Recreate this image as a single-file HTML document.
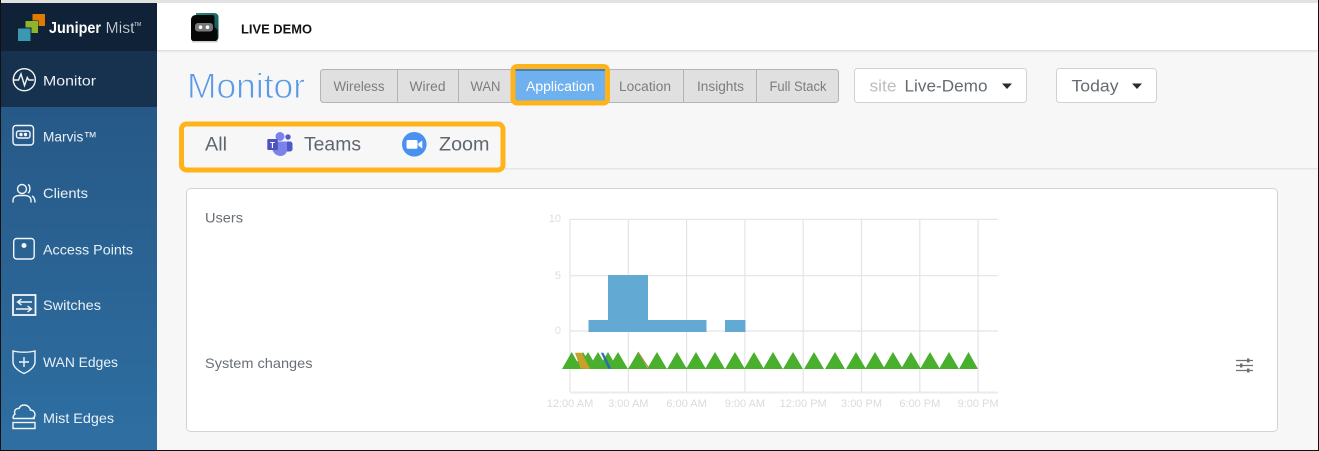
<!DOCTYPE html>
<html lang="en">
<head>
<meta charset="utf-8">
<title>Juniper Mist - Monitor</title>
<style>
html,body{margin:0;padding:0;width:1319px;height:451px;overflow:hidden;background:#f7f7f7}
svg{display:block}
text{font-family:"Liberation Sans",sans-serif}
.nav{font-size:14px;fill:#e9f1f7}
.tab{font-size:13.5px;fill:#7d7d7d}
.ax{font-size:11px;fill:#d9dbde}
.ay{font-size:11px;fill:#e4ddd8}
.lbl{font-size:14px;fill:#6a6f75}
.sub{font-size:19px;fill:#5f6770}
.ic{fill:none;stroke:#f2f6f9;stroke-width:1.4}
</style>
</head>
<body>
<svg width="1319" height="451" viewBox="0 0 1319 451" xmlns="http://www.w3.org/2000/svg">
<defs>
<linearGradient id="side" x1="0" y1="0" x2="0" y2="1"><stop offset="0" stop-color="#24527f"/><stop offset="1" stop-color="#2e6fa2"/></linearGradient>
<linearGradient id="hs" x1="0" y1="0" x2="0" y2="1"><stop offset="0" stop-color="#dcdcdc"/><stop offset="1" stop-color="#f7f7f7"/></linearGradient>
<linearGradient id="teal" x1="0" y1="0" x2="1" y2="1"><stop offset="0" stop-color="#2a8a84"/><stop offset="1" stop-color="#0f4a4a"/></linearGradient>
</defs>
<rect width="1319" height="451" fill="#f7f7f7"/>

<!-- header -->
<rect x="157" y="3" width="1162" height="47" fill="#fff"/>
<rect x="157" y="50" width="1162" height="3" fill="url(#hs)"/>
<rect x="0" y="0" width="1319" height="3" fill="#e2e2e2"/>
<rect x="192" y="40" width="26" height="2.500" rx="1" fill="#c9cfcf"/>
<path d="M196 13h18c3 0 4.500 2 4.500 4v20c0 2-1.500 4-4 4H196z" fill="url(#teal)"/>
<path d="M191 20c0-3 2-5 5-5h16c1.500 0 2.500 1 2.500 2.500V27l3 3v8c0 2-1 3-3 3H194c-2 0-3-1-3-3z" fill="#070707"/>
<rect x="195" y="23" width="18" height="8.500" rx="3" fill="#77797b"/>
<circle cx="200.500" cy="27.200" r="1.800" fill="#fff"/><circle cx="207.500" cy="27.200" r="1.800" fill="#fff"/>
<text x="241" y="33.500" font-size="13" font-weight="700" fill="#141414" textLength="71" lengthAdjust="spacingAndGlyphs">LIVE DEMO</text>

<!-- sidebar -->
<rect x="1" y="3" width="156" height="448" fill="url(#side)"/>
<rect x="1" y="3" width="156" height="48" fill="#0f2238"/>
<rect x="1" y="51" width="156" height="56" fill="#16324f"/>
<rect x="32.500" y="14" width="12.500" height="12" fill="#e07b00"/>
<rect x="24.500" y="20.500" width="14" height="13" fill="#0f2238"/>
<rect x="25.500" y="21" width="12.500" height="12" fill="#8fb52c"/>
<rect x="17" y="27.500" width="14.500" height="14" fill="#0f2238"/>
<rect x="18" y="28.500" width="12.500" height="12.500" fill="#3b98b3"/>
<text x="49" y="33" font-size="15.500" font-weight="700" fill="#fff" textLength="52" lengthAdjust="spacingAndGlyphs">Juniper</text>
<text x="105.500" y="33" font-size="15.500" fill="#dfe4e9" stroke="#0f2238" stroke-width=".3" textLength="29" lengthAdjust="spacingAndGlyphs">Mist</text>
<text x="134" y="26" font-size="5" fill="#dfe4e9">TM</text>

<circle class="ic" cx="24.300" cy="79.700" r="11"/>
<path class="ic" d="M14 80h4.500l2.500-6 3.500 11.500 2.800-8 1.500 2.500h5"/>
<text class="nav" x="43" y="85.300" textLength="53" lengthAdjust="spacingAndGlyphs">Monitor</text>

<rect class="ic" x="13" y="125.500" width="20.500" height="19.500" rx="3"/>
<rect class="ic" x="16.500" y="131" width="13.500" height="7" rx="2"/>
<circle cx="21" cy="134.500" r="1.700" fill="#f2f6f9"/><circle cx="25.500" cy="134.500" r="1.700" fill="#f2f6f9"/>
<text class="nav" x="43" y="141.300" textLength="54" lengthAdjust="spacingAndGlyphs">Marvis™</text>

<circle class="ic" cx="22" cy="189" r="4.500"/>
<path class="ic" d="M13 202.500v-2c0-3.500 3-5 6-5h6c3 0 6 1.500 6 5v2M28 184.500c2.500 1 2.500 7 0 8.500M32 196c2 1 3 2.500 3 6.500"/>
<text class="nav" x="43" y="198" textLength="45" lengthAdjust="spacingAndGlyphs">Clients</text>

<rect class="ic" x="13.700" y="238.500" width="20.500" height="20.500" rx="3"/>
<circle cx="24" cy="245.500" r="2.500" fill="#f2f6f9"/>
<text class="nav" x="43" y="254.300" textLength="90" lengthAdjust="spacingAndGlyphs">Access Points</text>

<rect class="ic" style="stroke-width:1.800" x="13" y="295" width="22.500" height="20"/>
<path class="ic" d="M32 302H18M21.500 299l-4 3 4 3M16 309h15M27.500 306l4 3-4 3"/>
<text class="nav" x="43" y="310" textLength="58" lengthAdjust="spacingAndGlyphs">Switches</text>

<path class="ic" d="M13 351c3 .8 7 1.200 11 1.200s8-.4 11-1.200v11c0 5-6 9.500-11 11.500-5-2-11-6.500-11-11.500z"/>
<path class="ic" d="M24 357v10M19 362h10"/>
<text class="nav" x="43" y="367" textLength="75" lengthAdjust="spacingAndGlyphs">WAN Edges</text>

<path class="ic" d="M13 418.500c0-2 .5-3.500 2-4.500-1.500-3 1-6 4-5.500 1-2.500 3-3.500 5-3.500 3.500 0 6 2.500 6.500 5 2.500 0 4.500 2 4.500 4.500 0 1.500-.8 2.800-2 3.500M13 418.500h22"/>
<rect class="ic" x="13" y="422.500" width="22" height="6"/>
<text class="nav" x="43" y="423" textLength="71" lengthAdjust="spacingAndGlyphs">Mist Edges</text>

<!-- title -->
<text x="187" y="98" font-size="35.500" fill="#5a9ae8" stroke="#f7f7f7" stroke-width=".9" textLength="118" lengthAdjust="spacingAndGlyphs">Monitor</text>

<!-- tabs -->
<rect x="320.500" y="69.500" width="518" height="33" rx="3" fill="#e0e0e0" stroke="#b4b4b4"/>
<path d="M397.500 70v32M458.500 70v32M683.500 70v32M756.500 70v32" stroke="#b4b4b4"/>
<text class="tab" x="333.500" y="91" textLength="51" lengthAdjust="spacingAndGlyphs">Wireless</text>
<text class="tab" x="409.500" y="91" textLength="36" lengthAdjust="spacingAndGlyphs">Wired</text>
<text class="tab" x="470.500" y="91" textLength="30" lengthAdjust="spacingAndGlyphs">WAN</text>
<rect x="513" y="66.500" width="94.500" height="36.500" rx="4" fill="#6fb0ee" stroke="#ffb31a" stroke-width="5"/>
<rect x="515.500" y="69" width="89.500" height="2" fill="#3f80bd"/>
<text class="tab" style="fill:#fff" x="526" y="91" textLength="68.500" lengthAdjust="spacingAndGlyphs">Application</text>
<text class="tab" x="619" y="91" textLength="52" lengthAdjust="spacingAndGlyphs">Location</text>
<text class="tab" x="697" y="91" textLength="47" lengthAdjust="spacingAndGlyphs">Insights</text>
<text class="tab" x="769.500" y="91" textLength="57" lengthAdjust="spacingAndGlyphs">Full Stack</text>

<!-- dropdowns -->
<rect x="854.500" y="68.500" width="172" height="34" rx="3" fill="#fff" stroke="#d2d2d2"/>
<text x="869.500" y="91.500" font-size="16.500" fill="#bdbdbd" textLength="27" lengthAdjust="spacingAndGlyphs">site</text>
<text x="904.500" y="91.500" font-size="16.500" fill="#646b73" textLength="83" lengthAdjust="spacingAndGlyphs">Live-Demo</text>
<path d="M1002 83.500h10l-5 5.500z" fill="#2b2b2b"/>
<rect x="1056.500" y="68.500" width="100" height="34" rx="3" fill="#fff" stroke="#d2d2d2"/>
<text x="1071.500" y="91.500" font-size="16.500" fill="#646b73" textLength="47" lengthAdjust="spacingAndGlyphs">Today</text>
<path d="M1132 83.500h10l-5 5.500z" fill="#2b2b2b"/>

<!-- sub tabs -->
<rect x="505" y="168" width="814" height="1.500" fill="#e6e6e6"/>
<rect x="181.500" y="124" width="321.500" height="46" rx="5" fill="#f7f7f7" stroke="#ffb31a" stroke-width="5"/>
<text class="sub" x="205" y="150.500" textLength="22" lengthAdjust="spacingAndGlyphs">All</text>
<circle cx="288" cy="137" r="2.700" fill="#5059c9"/>
<rect x="284" y="141.500" width="8.500" height="10" rx="2.500" fill="#5059c9"/>
<circle cx="280" cy="136.500" r="4.500" fill="#7b83eb"/>
<path d="M272 141.500h15v8c0 4-3 6.500-6.500 6.500s-7-2.500-8-6z" fill="#7b83eb"/>
<rect x="267.300" y="139" width="10.500" height="11" rx="1" fill="#4b53bc"/>
<text x="270" y="148" font-size="8" font-weight="700" fill="#fff">T</text>
<text class="sub" x="304" y="150.500" textLength="57" lengthAdjust="spacingAndGlyphs">Teams</text>
<circle cx="414.300" cy="144.300" r="12.300" fill="#4a90f0"/>
<rect x="406.500" y="140" width="11" height="8.800" rx="1.500" fill="#fff"/>
<path d="M418.300 143.500l4-3v8l-4-3z" fill="#fff"/>
<text class="sub" x="439" y="150.500" textLength="50.500" lengthAdjust="spacingAndGlyphs">Zoom</text>

<!-- card -->
<rect x="186.500" y="188.500" width="1091" height="243" rx="4" fill="#fff" stroke="#d4d4d4"/>
<text class="lbl" x="205" y="222.500" textLength="38" lengthAdjust="spacingAndGlyphs">Users</text>
<text class="lbl" x="205" y="368" textLength="107.500" lengthAdjust="spacingAndGlyphs">System changes</text>

<!-- chart grid -->
<g stroke="#e4e4e4" stroke-width="1.200">
<path d="M570 219v173M628.300 219v173M686.600 219v173M744.900 219v173M803.200 219v173M861.500 219v173M919.800 219v173M978.100 219v173"/>
<path d="M570 219.300h428M570 275.700h428M570 331h428"/>
</g>
<rect x="570" y="391.500" width="428" height="2" fill="#ebebeb"/>
<text class="ay" x="561" y="222" text-anchor="end">10</text>
<text class="ay" x="561" y="279" text-anchor="end">5</text>
<text class="ay" x="561" y="334" text-anchor="end">0</text>
<path d="M588.500 320H608V275h40v45h58.500v12H588.500zM725 320h20.500v12H725z" fill="#62a9d3"/>

<!-- system change markers -->
<path d="M562 369l9.700-17 9.700 17zM573 369l10-17 10 17zM578 369l10-17 10 17zM588 369l10-17 10 17zM598 369l10-17 10 17zM608 369l10-17 10 17zM628 369l10-17 10 17zM647 369l10-17 10 17zM667 369l10-17 10 17zM686 369l10-17 10 17zM705 369l10-17 10 17zM725 369l10-17 10 17zM744 369l10-17 10 17zM763 369l10-17 10 17zM783 369l10-17 10 17zM804 369l10-17 10 17zM825 369l10-17 10 17zM846 369l10-17 10 17zM865 369l10-17 10 17zM883 369l10-17 10 17zM901 369l10-17 10 17zM920 369l10-17 10 17zM939 369l10-17 10 17zM959 369l9.500-17 9.500 17z" fill="#48b02c"/>
<path d="M575 352.700h6.700l8.500 16h-9.500z" fill="#c9a02a"/>
<path d="M601 352.700h2.300l8 16h-3z" fill="#2a6cb0"/>
<path d="M638 352l11 16.700" stroke="#b08a40" stroke-width="1.200" fill="none"/>

<g class="ax">
<text class="ax" x="570" y="407" text-anchor="middle">12:00 AM</text>
<text class="ax" x="628.300" y="407" text-anchor="middle">3:00 AM</text>
<text class="ax" x="686.600" y="407" text-anchor="middle">6:00 AM</text>
<text class="ax" x="744.900" y="407" text-anchor="middle">9:00 AM</text>
<text class="ax" x="803.200" y="407" text-anchor="middle">12:00 PM</text>
<text class="ax" x="861.500" y="407" text-anchor="middle">3:00 PM</text>
<text class="ax" x="919.800" y="407" text-anchor="middle">6:00 PM</text>
<text class="ax" x="978.100" y="407" text-anchor="middle">9:00 PM</text>
</g>

<!-- settings sliders -->
<path d="M1236 360.500h17M1236 365.500h17M1236 370.500h17" stroke="#707070" stroke-width="1.200"/>
<rect x="1247" y="358.500" width="2.500" height="4" fill="#707070"/>
<rect x="1240" y="363.500" width="2.500" height="4" fill="#707070"/>
<rect x="1247" y="368.500" width="2.500" height="4" fill="#707070"/>

<!-- screenshot frame -->
<rect x="0" y="0" width="1" height="451" fill="#111"/>
<rect x="1318" y="0" width="1" height="451" fill="#111"/>
<rect x="0" y="450" width="1319" height="1" fill="#111"/>
</svg>
</body>
</html>
